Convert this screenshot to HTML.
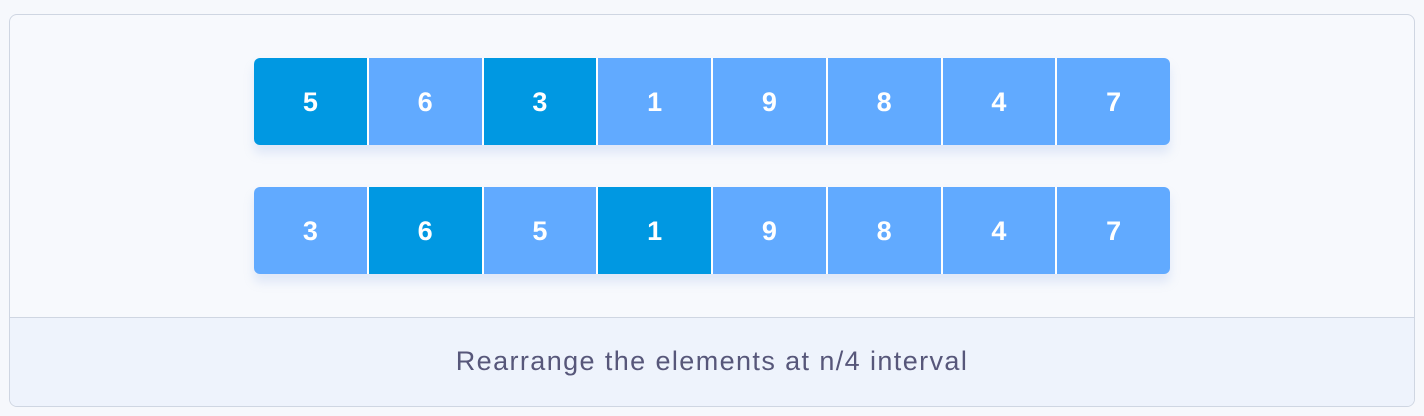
<!DOCTYPE html><html><head><style>
body{margin:0;width:1424px;height:416px;background:#f6f8fc;font-family:"Liberation Sans",sans-serif;position:relative;overflow:hidden}
.card{position:absolute;left:9px;top:14px;width:1404px;height:391px;border:1.5px solid #cfd6e2;border-radius:8px;background:#f7f9fd;overflow:hidden}
.foot{position:absolute;left:0;right:0;top:302px;bottom:0;background:#eef3fc;border-top:1.5px solid #cfd6e2;text-align:center;line-height:86px;font-size:27px;letter-spacing:1.4px;color:#57577a}
.row{position:absolute;left:254px;width:916px;height:87px;display:flex;border-radius:6px;overflow:hidden;box-shadow:0 8px 10px rgba(150,180,230,.25)}
.row div{flex:1;background:#61aaff;color:#fff;font-weight:bold;font-size:27px;display:flex;align-items:center;justify-content:center;border-left:2px solid #fff;padding-top:2px}
.row div:first-child{border-left:none}
.row div.d{background:#0098e2}
</style></head><body>
<div class="card"><div class="foot">Rearrange the elements at n/4 interval</div></div>
<div class="row" style="top:58px"><div class="d">5</div><div>6</div><div class="d">3</div><div>1</div><div>9</div><div>8</div><div>4</div><div>7</div></div>
<div class="row" style="top:187px"><div>3</div><div class="d">6</div><div>5</div><div class="d">1</div><div>9</div><div>8</div><div>4</div><div>7</div></div>
</body></html>
